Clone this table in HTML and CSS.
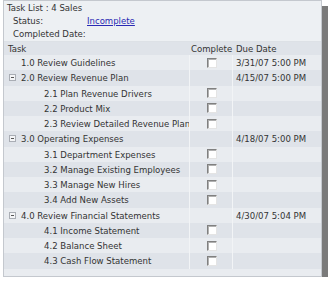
FILE: index.html
```html
<!DOCTYPE html>
<html>
<head>
<meta charset="utf-8">
<link rel="stylesheet" href="styles.css">
</head>
<body>
<div class="panel">
  <div class="info">
    <div class="title">Task List : 4 Sales</div>
    <div class="field"><span class="label">Status:</span><a class="link" href="#">Incomplete</a></div>
    <div class="field"><span class="label">Completed Date:</span></div>
  </div>
  <div class="grid">
    <div class="row head"><div class="c-task">Task</div><div class="c-done">Complete</div><div class="c-due">Due Date</div></div>
    <div class="row"><div class="c-task lvl1">1.0 Review Guidelines</div><div class="c-done"><span class="cb"></span></div><div class="c-due">3/31/07 5:00 PM</div></div>
    <div class="row alt"><div class="c-task grp"><span class="tog"><svg width="7" height="7" viewBox="0 0 7 7"><rect x="0.5" y="0.5" width="6" height="6" fill="#f4f5f7" stroke="#a9adb4"/><path d="M2 3.5h3" stroke="#555" stroke-width="1"/></svg></span>2.0 Review Revenue Plan</div><div class="c-done"></div><div class="c-due">4/15/07 5:00 PM</div></div>
    <div class="row"><div class="c-task lvl2">2.1 Plan Revenue Drivers</div><div class="c-done"><span class="cb"></span></div><div class="c-due"></div></div>
    <div class="row alt"><div class="c-task lvl2">2.2 Product Mix</div><div class="c-done"><span class="cb"></span></div><div class="c-due"></div></div>
    <div class="row"><div class="c-task lvl2">2.3 Review Detailed Revenue Plan</div><div class="c-done"><span class="cb"></span></div><div class="c-due"></div></div>
    <div class="row alt"><div class="c-task grp"><span class="tog"><svg width="7" height="7" viewBox="0 0 7 7"><rect x="0.5" y="0.5" width="6" height="6" fill="#f4f5f7" stroke="#a9adb4"/><path d="M2 3.5h3" stroke="#555" stroke-width="1"/></svg></span>3.0 Operating Expenses</div><div class="c-done"></div><div class="c-due">4/18/07 5:00 PM</div></div>
    <div class="row"><div class="c-task lvl2">3.1 Department Expenses</div><div class="c-done"><span class="cb"></span></div><div class="c-due"></div></div>
    <div class="row alt"><div class="c-task lvl2">3.2 Manage Existing Employees</div><div class="c-done"><span class="cb"></span></div><div class="c-due"></div></div>
    <div class="row"><div class="c-task lvl2">3.3 Manage New Hires</div><div class="c-done"><span class="cb"></span></div><div class="c-due"></div></div>
    <div class="row alt"><div class="c-task lvl2">3.4 Add New Assets</div><div class="c-done"><span class="cb"></span></div><div class="c-due"></div></div>
    <div class="row"><div class="c-task grp"><span class="tog"><svg width="7" height="7" viewBox="0 0 7 7"><rect x="0.5" y="0.5" width="6" height="6" fill="#f4f5f7" stroke="#a9adb4"/><path d="M2 3.5h3" stroke="#555" stroke-width="1"/></svg></span>4.0 Review Financial Statements</div><div class="c-done"></div><div class="c-due">4/30/07 5:04 PM</div></div>
    <div class="row alt"><div class="c-task lvl2">4.1 Income Statement</div><div class="c-done"><span class="cb"></span></div><div class="c-due"></div></div>
    <div class="row"><div class="c-task lvl2">4.2 Balance Sheet</div><div class="c-done"><span class="cb"></span></div><div class="c-due"></div></div>
    <div class="row alt"><div class="c-task lvl2">4.3 Cash Flow Statement</div><div class="c-done"><span class="cb"></span></div><div class="c-due"></div></div>
  </div>
</div>
</body>
</html>
```
FILE: styles.css
```css
html, body {
  margin: 0;
  padding: 0;
  background: #ffffff;
}
body {
  font-family: "DejaVu Sans Condensed", "Noto Sans", sans-serif;
  font-size: 9.5px;
  color: #333333;
}
.panel {
  margin: 0 0 0 3px;
  width: 319px;
  height: 277px;
  box-sizing: border-box;
  border: 1px solid #c4c8ce;
  background: #e9ecf0;
  box-shadow: 6px 6px 0 #7a7a7a;
}
.info {
  background: #edf0f3;
  padding-bottom: 1px;
  border-bottom: 1px solid #dde1e6;
}
.title, .field {
  height: 13px;
  line-height: 13px;
  white-space: nowrap;
}
.title {
  padding-left: 3px;
}
.field {
  display: flex;
  padding-left: 9px;
}
.label {
  width: 74px;
}
.link {
  color: #2a2ab4;
  text-decoration: underline;
}
.grid {
  display: flex;
  flex-direction: column;
}
.row {
  display: grid;
  grid-template-columns: 186px 43px 1fr;
  height: 15.25px;
  line-height: 15px;
  white-space: nowrap;
}
.row.head {
  height: 13px;
  line-height: 13px;
  background: #dfe3e9;
}
.row.alt {
  background: #dfe3e9;
}
.c-task {
  padding-left: 4px;
  overflow: hidden;
  border-right: 1px solid #f2f4f6;
  display: flex;
  align-items: center;
}
.c-done {
  display: flex;
  align-items: center;
  justify-content: center;
  border-right: 1px solid #f2f4f6;
  padding-left: 2px;
}
.head .c-done {
  justify-content: flex-start;
  padding-left: 1px;
}
.c-due {
  padding-left: 3px;
}
.head .c-task, .head .c-done {
  border-right: none;
}
.lvl1 { padding-left: 17px; }
.lvl2 { padding-left: 40px; }
.grp { padding-left: 4px; }
.tog {
  display: inline-flex;
  width: 7px;
  height: 7px;
  margin-right: 5px;
  margin-left: 1px;
}
.cb {
  display: block;
  width: 10px;
  height: 10px;
  box-sizing: border-box;
  background: #ffffff;
  border-style: solid;
  border-width: 1px;
  border-color: #808080 #e4e4e4 #e4e4e4 #808080;
  box-shadow: inset 1px 1px 0 #b0b0b0;
}
```
